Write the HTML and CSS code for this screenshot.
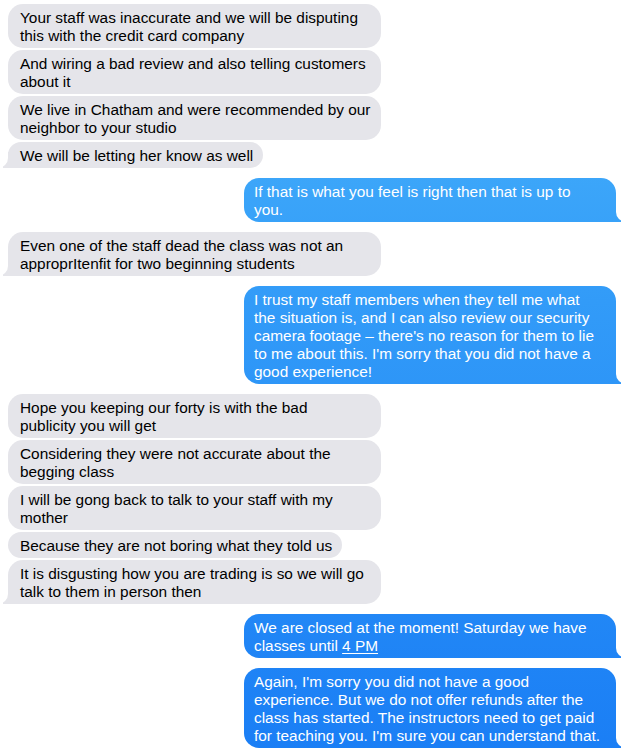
FILE: index.html
```html
<!DOCTYPE html>
<html lang="en">
<head>
<meta charset="utf-8">
<title>Messages</title>
<link rel="stylesheet" href="styles.css">
</head>
<body>
<div class="thread">
  <div class="msg in wide">Your staff was inaccurate and we will be disputing<br>this with the credit card company</div>
  <div class="msg in wide">And wiring a bad review and also telling customers<br>about it</div>
  <div class="msg in wide">We live in Chatham and were recommended by our<br>neighbor to your studio</div>
  <div class="msg in tail">We will be letting her know as well</div>

  <div class="msg out wide tail new">If that is what you feel is right then that is up to<br>you.</div>

  <div class="msg in wide tail new">Even one of the staff dead the class was not an<br>approprItenfit for two beginning students</div>

  <div class="msg out wide tail new">I trust my staff members when they tell me what<br>the situation is, and I can also review our security<br>camera footage – there's no reason for them to lie<br>to me about this. I'm sorry that you did not have a<br>good experience!</div>

  <div class="msg in wide new">Hope you keeping our forty is with the bad<br>publicity you will get</div>
  <div class="msg in wide">Considering they were not accurate about the<br>begging class</div>
  <div class="msg in wide">I will be gong back to talk to your staff with my<br>mother</div>
  <div class="msg in">Because they are not boring what they told us</div>
  <div class="msg in wide tail">It is disgusting how you are trading is so we will go<br>talk to them in person then</div>

  <div class="msg out wide tail new">We are closed at the moment! Saturday we have<br>classes until <span class="link">4 PM</span></div>

  <div class="msg out wide tail new">Again, I'm sorry you did not have a good<br>experience. But we do not offer refunds after the<br>class has started. The instructors need to get paid<br>for teaching you. I'm sure you can understand that.</div>
</div>
</body>
</html>
```

FILE: styles.css
```css
html, body {
  margin: 0;
  padding: 0;
  background: #ffffff;
  overflow: hidden;
}

.thread {
  display: flex;
  flex-direction: column;
  padding: 4px 15px 0 8px;
  font-family: "Liberation Sans", Arial, sans-serif;
  font-size: 15.4px;
  line-height: 18px;
}

.msg {
  position: relative;
  z-index: 0;
  box-sizing: border-box;
  padding: 5px 10px 3px 12px;
  border-radius: 15px;
  margin-top: 2px;
  white-space: nowrap;
}

.msg:first-child {
  margin-top: 0;
}

.msg.new {
  margin-top: 10px;
}

.msg.wide {
  width: 373px;
}

.in {
  align-self: flex-start;
  background: #e5e5ea;
  color: #000000;
}

.out {
  align-self: flex-end;
  padding: 5px 12px 3px 10px;
  background: linear-gradient(180deg, #4ab5fb 0%, #329bf8 40%, #1a7ef5 100%) fixed;
  color: #ffffff;
}

.out.wide {
  width: 372px;
}

.link {
  text-decoration: underline;
  text-underline-offset: 2px;
}

/* tails */
.tail::before,
.tail::after {
  content: "";
  position: absolute;
  z-index: -1;
  bottom: 0;
  height: 16px;
}

.in.tail::before {
  left: -5px;
  width: 20px;
  background: #e5e5ea;
}

.in.tail::after {
  left: -20px;
  width: 20px;
  background: #ffffff;
  border-bottom-right-radius: 10px;
}

.out.tail::before {
  right: -5px;
  width: 20px;
  background: linear-gradient(180deg, #4ab5fb 0%, #329bf8 40%, #1a7ef5 100%) fixed;
}

.out.tail::after {
  right: -20px;
  width: 20px;
  background: #ffffff;
  border-bottom-left-radius: 10px;
}
```
